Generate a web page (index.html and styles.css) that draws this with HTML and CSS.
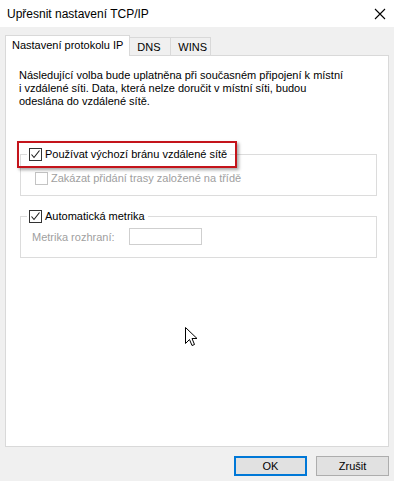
FILE: index.html
```html
<!DOCTYPE html>
<html lang="cs">
<head>
    <meta charset="UTF-8">
    <title>Upřesnit nastavení TCP/IP</title>
    <link rel="stylesheet" href="styles.css">
</head>
<body>
    <div class="dialog">
        <div class="titlebar">
            <span class="title">Upřesnit nastavení TCP/IP</span>
            <svg class="close" width="12" height="12" viewBox="0 0 12 12">
                <path d="M1 1 L11 11 M11 1 L1 11" stroke="#000" stroke-width="1.1" fill="none"/>
            </svg>
        </div>
        <div class="content">
            <div class="tabs">
                <div class="tab active">Nastavení protokolu IP</div>
                <div class="tab dns">DNS</div>
                <div class="tab wins">WINS</div>
            </div>
            <div class="panel">
                <p class="info">Následující volba bude uplatněna při současném připojení k místní<br>i vzdálené síti. Data, která nelze doručit v místní síti, budou<br>odeslána do vzdálené sítě.</p>

                <fieldset class="group first">
                    <legend>
                        <span class="check">
                            <svg width="11" height="11" viewBox="0 0 11 11"><path d="M1.5 5.5 L4 8.5 L9.5 1.5" stroke="#1a1a1a" stroke-width="1.1" fill="none"/></svg>
                        </span>
                        <span>Používat výchozí bránu vzdálené sítě</span>
                    </legend>
                    <div class="row disabled">
                        <span class="check"></span>
                        <span>Zakázat přidání trasy založené na třídě</span>
                    </div>
                </fieldset>

                <fieldset class="group second">
                    <legend>
                        <span class="check">
                            <svg width="11" height="11" viewBox="0 0 11 11"><path d="M1.5 5.5 L4 8.5 L9.5 1.5" stroke="#1a1a1a" stroke-width="1.1" fill="none"/></svg>
                        </span>
                        <span>Automatická metrika</span>
                    </legend>
                    <div class="row disabled metric">
                        <span class="label">Metrika rozhraní:</span>
                        <span class="field"></span>
                    </div>
                </fieldset>

                <div class="highlight"></div>

                <svg class="cursor" width="13" height="21" viewBox="0 0 13 21">
                    <path d="M0.5 0.5 L0.5 16.5 L4.5 12.5 L7 18.5 L9.5 17.5 L7 11.5 L12 11.5 Z" fill="#fff" stroke="#000" stroke-width="1"/>
                </svg>
            </div>
            <div class="buttons">
                <button class="btn default">OK</button>
                <button class="btn">Zrušit</button>
            </div>
        </div>
    </div>
</body>
</html>
```

FILE: styles.css
```css
body {
    margin: 0;
    font-family: "Liberation Sans", Arial, sans-serif;
    font-size: 11px;
    color: #000;
    background-color: #f0f0f0;
}
.dialog {
    width: 394px;
    height: 481px;
    display: flex;
    flex-direction: column;
    overflow: hidden;
}
.titlebar {
    flex-shrink: 0;
    height: 27px;
    background-color: #fff;
    display: flex;
    align-items: center;
    justify-content: space-between;
    padding: 0 7px 0 7px;
}
.title {
    font-size: 12px;
}
.close {
    margin-right: 1px;
}
.content {
    flex: 1;
    background-color: #f0f0f0;
    padding: 8px 5px 0 5px;
}
.tabs {
    display: flex;
    align-items: flex-end;
    height: 20px;
    position: relative;
    z-index: 1;
}
.tab {
    height: 17px;
    line-height: 18px;
    padding: 0 0 0 7px;
    border: 1px solid #d9d9d9;
    border-bottom: none;
    border-left: none;
    background-color: #f0f0f0;
}
.tab.dns {
    width: 33px;
}
.tab.wins {
    width: 32px;
}
.tab.active {
    height: 20px;
    line-height: 19px;
    padding: 0 6px 0 6px;
    background-color: #fff;
    border-left: 1px solid #d9d9d9;
    margin-bottom: -1px;
}
.panel {
    position: relative;
    height: 390px;
    background-color: #fff;
    border: 1px solid #d9d9d9;
    padding: 0 0 0 13px;
}
.info {
    margin: 0;
    padding-top: 13px;
    line-height: 13px;
    white-space: nowrap;
}
.group {
    margin: 0;
    border: 1px solid #dcdcdc;
    width: 355px;
    padding: 0;
    margin-left: 1px;
}
.group.first {
    margin-top: 39px;
    padding-bottom: 10px;
}
.group.second {
    margin-top: 13px;
    padding-bottom: 12px;
}
.group legend {
    display: flex;
    align-items: center;
    gap: 3px;
    height: 14px;
    padding: 0 3px 0 2px;
    margin-left: 6px;
    line-height: 14px;
}
.check {
    width: 11px;
    height: 11px;
    border: 1px solid #333;
    background-color: #fff;
    display: inline-block;
}
.check svg {
    display: block;
}
.row {
    display: flex;
    align-items: center;
    gap: 3px;
    height: 14px;
    margin: 10px 0 0 14px;
}
.row.disabled {
    color: #a0a0a0;
}
.row.disabled .check {
    border-color: #c4c4c4;
}
.row.metric {
    height: 17px;
    margin: 5px 0 0 11px;
    gap: 0;
}
.label {
    width: 97px;
}
.field {
    width: 71px;
    height: 15px;
    border: 1px solid #cfcfcf;
    display: inline-block;
}
.highlight {
    position: absolute;
    left: 11px;
    top: 85px;
    width: 216px;
    height: 23px;
    border: 2px solid #c4141b;
    box-shadow: 2px 2px 3px rgba(0, 0, 0, 0.35);
}
.cursor {
    position: absolute;
    left: 179px;
    top: 271px;
}
.buttons {
    display: flex;
    justify-content: flex-end;
    gap: 9px;
    margin-top: 9px;
}
.btn {
    width: 73px;
    height: 20px;
    font-family: "Liberation Sans", Arial, sans-serif;
    font-size: 11px;
    color: #000;
    background-color: #e1e1e1;
    border: 1px solid #adadad;
    padding: 0;
}
.btn.default {
    border: 2px solid #0078d7;
}
```
